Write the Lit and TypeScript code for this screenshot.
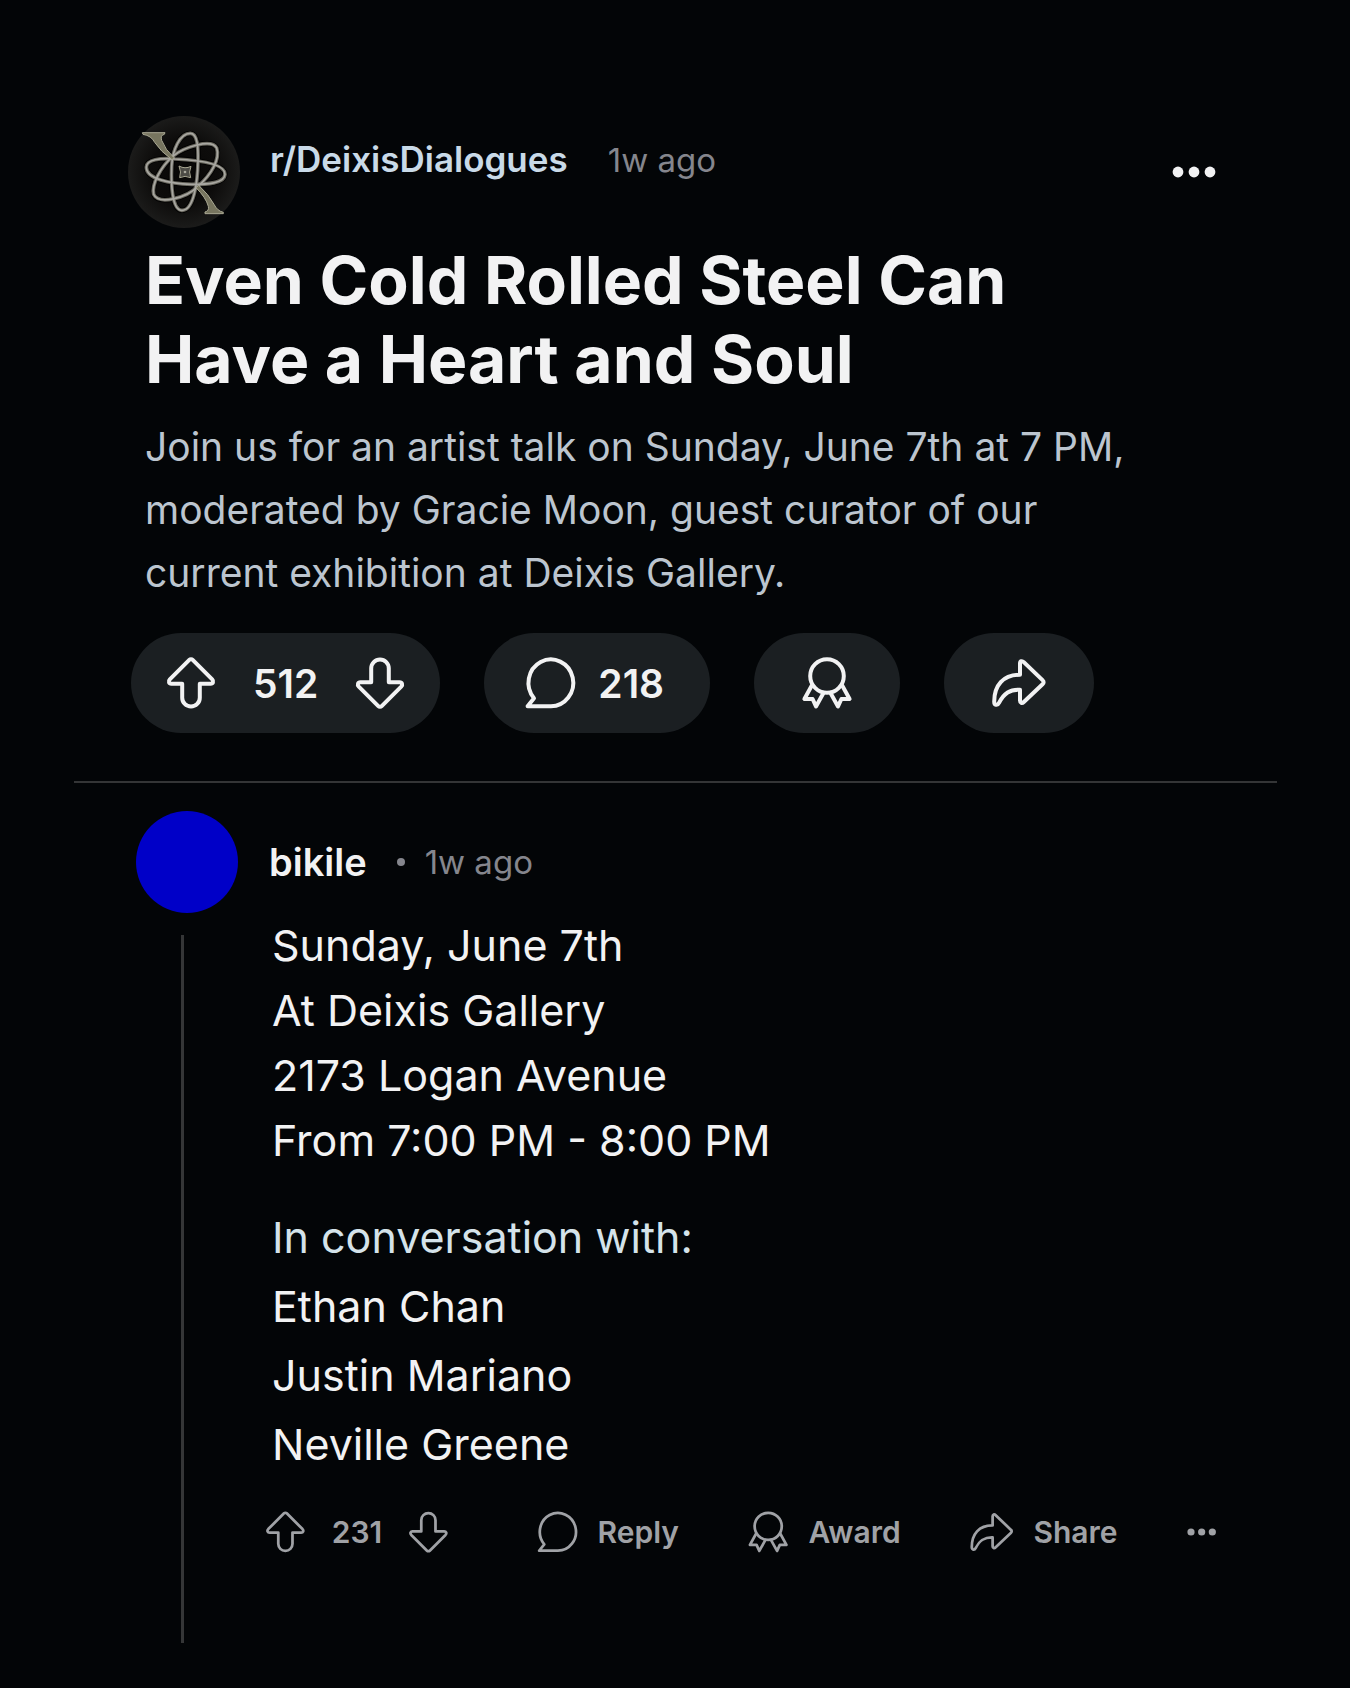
import { LitElement, html, css, svg } from 'lit';
import { customElement, property } from 'lit/decorators.js';

const icons = {
  up: {
    box: '0 0 48 52',
    shape: svg`<path d="M22.3 2.9a2.4 2.4 0 0 1 3.4 0L45.2 22.4c1.8 1.9.9 4.3-1.6 4.3H32.8v14a8.8 8.8 0 0 1-17.6 0v-14H4.4c-2.5 0-3.4-2.4-1.6-4.3z"/>`,
  },
  down: {
    box: '0 0 48 52',
    shape: svg`<path d="M22.3 49.1a2.4 2.4 0 0 0 3.4 0L45.2 29.6c1.8-1.9.9-4.3-1.6-4.3H32.8v-14a8.8 8.8 0 0 0-17.6 0v14H4.4c-2.5 0-3.4 2.4-1.6 4.3z"/>`,
  },
  comment: {
    box: '0 0 50 52',
    shape: svg`<path d="M2.6 49.2L9 41.2A22.4 23.4 0 1 1 25.5 49.2z"/>`,
  },
  award: {
    box: '0 0 50 52',
    shape: svg`<circle cx="25" cy="19" r="16.8"/><path d="M9.8 28.5L2.4 42h8.2L14 49.4l7.6-13.6M40.2 28.5L47.6 42h-8.2L36 49.4l-7.6-13.6"/>`,
  },
  share: {
    box: '0 0 54 52',
    shape: svg`<path d="M28 17.8V6.6c0-2.6 2-3.2 3.8-1.4l19 18.2a2.4 2.4 0 0 1 0 3.6L31.8 45c-1.8 1.8-3.8 1.1-3.8-1.4V32.7C18 32.4 12 36 7 45.9c-1.5 3-4.8 2.4-4.8-1.2C2.2 28.5 11 17.8 28 17.8z"/>`,
  },
  more: {
    box: '0 0 44 12',
    shape: svg`<g fill="currentColor" stroke="none"><circle cx="6" cy="6" r="5.4"/><circle cx="22" cy="6" r="5.4"/><circle cx="38" cy="6" r="5.4"/></g>`,
  },
};

@customElement('ui-icon')
export class UiIcon extends LitElement {
  @property() name: keyof typeof icons = 'up';

  static styles = css`
    :host {
      display: inline-flex;
    }
    .icon {
      display: block;
      height: var(--icon-height, 52px);
      fill: none;
      stroke: currentColor;
      stroke-width: var(--icon-stroke, 4);
      stroke-linejoin: round;
      stroke-linecap: round;
      overflow: visible;
    }
  `;

  render() {
    const icon = icons[this.name];
    return html`<svg class="icon" viewBox=${icon.box} aria-hidden="true">${icon.shape}</svg>`;
  }
}

@customElement('community-logo')
export class CommunityLogo extends LitElement {
  static styles = css`
    :host {
      display: block;
    }
    .logo {
      display: block;
      width: 100%;
    }
    .shadow {
      stroke: #000;
      stroke-width: 16;
    }
    .tube {
      stroke: #68665d;
      stroke-width: 11;
    }
    .shine {
      stroke: #a9a8a2;
      stroke-width: 5;
    }
  `;

  rings() {
    return svg`
      <path d="M241 101C263 101 265 145 264 185C263 245 252 332 216 332C185 332 183 250 185 200C187 150 210 101 241 101z"/>
      <path d="M109 202C110 180 150 174 195 178C260 181 345 190 345 224C344 252 290 254 245 254C180 252 108 238 109 202z"/>
      <path d="M188 170C222 142 305 116 320 145C331 178 304 225 264 260C228 296 146 316 131 284C124 254 152 202 188 170z"/>
    `;
  }

  render() {
    return html`
      <svg class="logo" viewBox="54 49 336 336" role="img" aria-label="DeixisDialogues">
        <defs>
          <radialGradient id="disc">
            <stop offset="0" stop-color="#080706"/>
            <stop offset="0.6" stop-color="#0d0c0b"/>
            <stop offset="1" stop-color="#1b1b1a"/>
          </radialGradient>
        </defs>
        <circle cx="222" cy="217" r="168" fill="url(#disc)"/>
        <g fill="none">
          <g class="shadow">${this.rings()}</g>
          <g class="tube">${this.rings()}</g>
          <g class="shine">${this.rings()}</g>
        </g>
        <g fill="#77755f" stroke="#a9a893" stroke-width="3" stroke-linejoin="round">
          <path d="M97 99H165L163 104Q150 107 155 122Q165 150 192 174L186 180Q152 156 134 128Q124 108 99 104z"/>
          <path d="M340 342H285V337Q298 334 295 320Q288 294 258 264L266 257Q296 284 312 314Q322 334 340 338z"/>
          <path d="M207 199Q225 209 243 200Q235 217 242 234Q225 226 209 234Q215 217 207 199z" fill="#4c4b45"/>
          <circle cx="225" cy="217" r="4" fill="#aaa99d" stroke="none"/>
        </g>
      </svg>
    `;
  }
}

@customElement('app-root')
export class AppRoot extends LitElement {
  static styles = css`
    :host {
      display: block;
      min-height: 100vh;
      background: #030507;
      color: #f2f2f3;
      font-family: Inter, "Liberation Sans", sans-serif;
    }
    * {
      box-sizing: border-box;
    }
    h1,
    p,
    ul {
      margin: 0;
      padding: 0;
      list-style: none;
    }
    button {
      display: inline-flex;
      align-items: center;
      padding: 0;
      border: 0;
      background: none;
      color: inherit;
      font: inherit;
      cursor: pointer;
    }
    a {
      color: inherit;
      text-decoration: none;
    }
    .page {
      padding: 116px 73px 44px 74px;
    }
    .post {
      padding: 0 61px 48px 54px;
      border-bottom: 2px solid #343536;
    }
    .post-head {
      display: flex;
      align-items: center;
      gap: 30px;
    }
    .logo {
      flex: none;
      width: 112px;
    }
    .byline {
      display: flex;
      flex: 1;
      align-items: baseline;
      gap: 40px;
      padding-bottom: 26px;
      line-height: 44px;
    }
    .community {
      color: #c9dae8;
      font-size: 35px;
      font-weight: 600;
    }
    .time {
      color: #85868d;
      font-size: 33px;
    }
    .post-text {
      max-width: 1018px;
      padding: 13px 0 0 17px;
    }
    .title {
      font-size: 66px;
      font-weight: 700;
      line-height: 79px;
    }
    .summary {
      padding-top: 16px;
      color: #bcc5cf;
      font-size: 39px;
      line-height: 63px;
    }
    .actions {
      display: flex;
      gap: 44px;
      padding: 29px 0 0 3px;
    }
    .pill {
      display: flex;
      align-items: center;
      justify-content: center;
      height: 100px;
      padding: 0 40px;
      border-radius: 50px;
      background: #1b1f22;
      font-size: 39px;
      font-weight: 600;
    }
    .votes {
      gap: 38px;
      padding: 0 36px;
    }
    .talk {
      gap: 23px;
      padding: 0 46px 0 41px;
    }
    .wide {
      padding: 0 48px;
    }
    .comment {
      display: flex;
      gap: 28px;
      padding: 28px 61px 0 62px;
    }
    .rail {
      display: flex;
      flex: none;
      flex-direction: column;
      align-items: center;
      gap: 22px;
      width: 102px;
    }
    .avatar {
      width: 102px;
      height: 102px;
      border-radius: 50%;
      background: #0000c8;
    }
    .thread {
      flex: 1;
      width: 3px;
      margin-right: 10px;
      background: #353637;
    }
    .comment-main {
      flex: 1;
      padding-bottom: 90px;
    }
    .author-line {
      display: flex;
      align-items: center;
      height: 102px;
      padding-left: 3px;
    }
    .author {
      font-size: 38px;
      font-weight: 600;
    }
    .dot {
      width: 8px;
      height: 8px;
      margin: 0 20px 0 30px;
      border-radius: 50%;
      background: #85868d;
    }
    .details,
    .guests {
      padding-left: 6px;
      font-size: 43px;
      line-height: 65px;
    }
    .guests {
      padding-top: 30px;
      line-height: 69px;
    }
    .lead {
      color: #d5e3ea;
    }
    .comment-actions {
      display: flex;
      align-items: center;
      justify-content: space-between;
      padding-top: 32px;
      color: #a0a2a6;
      font-size: 30px;
      font-weight: 600;
      --icon-height: 42px;
      --icon-stroke: 3.4;
    }
    .comment-votes {
      display: flex;
      align-items: center;
      gap: 27px;
      padding-right: 20px;
    }
    .comment-actions button {
      gap: 20px;
    }
    .comment-more {
      --icon-height: 8px;
    }
    .post-more {
      --icon-height: 12px;
    }
  `;

  details = [
    'Sunday, June 7th',
    'At Deixis Gallery',
    '2173 Logan Avenue',
    'From 7:00 PM - 8:00 PM',
  ];

  guests = ['Ethan Chan', 'Justin Mariano', 'Neville Greene'];

  render() {
    return html`
      <main class="page">
        <article class="post">
          <header class="post-head">
            <community-logo class="logo"></community-logo>
            <div class="byline">
              <a class="community" href="#community">r/DeixisDialogues</a>
              <span class="time">1w ago</span>
            </div>
            <button class="post-more" aria-label="More options"><ui-icon name="more"></ui-icon></button>
          </header>
          <div class="post-text">
            <h1 class="title">Even Cold Rolled Steel Can Have a Heart and Soul</h1>
            <p class="summary">
              Join us for an artist talk on Sunday, June 7th at 7 PM, moderated by
              Gracie Moon, guest curator of our current exhibition at Deixis Gallery.
            </p>
          </div>
          <div class="actions">
            <div class="pill votes">
              <button aria-label="Upvote"><ui-icon name="up"></ui-icon></button>
              <span>512</span>
              <button aria-label="Downvote"><ui-icon name="down"></ui-icon></button>
            </div>
            <button class="pill talk" aria-label="218 comments"><ui-icon name="comment"></ui-icon>218</button>
            <button class="pill wide" aria-label="Award"><ui-icon name="award"></ui-icon></button>
            <button class="pill wide" aria-label="Share"><ui-icon name="share"></ui-icon></button>
          </div>
        </article>

        <article class="comment">
          <div class="rail">
            <div class="avatar"></div>
            <div class="thread"></div>
          </div>
          <div class="comment-main">
            <header class="author-line">
              <a class="author" href="#bikile">bikile</a>
              <span class="dot"></span>
              <span class="time">1w ago</span>
            </header>
            <div class="details">
              ${this.details.map((line) => html`<p>${line}</p>`)}
            </div>
            <div class="guests">
              <p class="lead">In conversation with:</p>
              <ul>
                ${this.guests.map((guest) => html`<li>${guest}</li>`)}
              </ul>
            </div>
            <footer class="comment-actions">
              <div class="comment-votes">
                <button aria-label="Upvote"><ui-icon name="up"></ui-icon></button>
                <span>231</span>
                <button aria-label="Downvote"><ui-icon name="down"></ui-icon></button>
              </div>
              <button><ui-icon name="comment"></ui-icon>Reply</button>
              <button><ui-icon name="award"></ui-icon>Award</button>
              <button><ui-icon name="share"></ui-icon>Share</button>
              <button class="comment-more" aria-label="More options"><ui-icon name="more"></ui-icon></button>
            </footer>
          </div>
        </article>
      </main>
    `;
  }
}
